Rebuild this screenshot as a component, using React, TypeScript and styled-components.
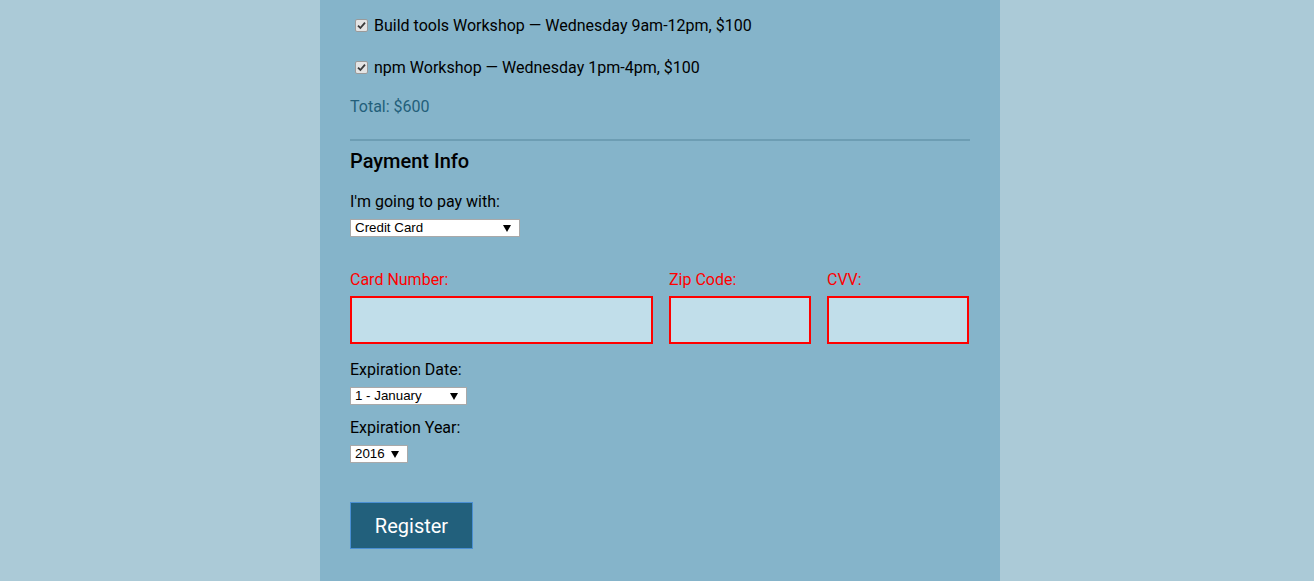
import React from "react";
import styled, { createGlobalStyle } from "styled-components";

const Global = createGlobalStyle`
  html, body { margin: 0; padding: 0; }
  body {
    background: #abcad7;
    font-family: Roboto, "Noto Sans", Arial, sans-serif;
    color: #000;
  }
`;

const Page = styled.div`
  display: flex;
  justify-content: center;
  padding-left: 6px;
  min-height: 581px;
`;

const Container = styled.form`
  width: 620px;
  padding: 15px 30px 32px;
  background: #85b4ca;
  display: flex;
  flex-direction: column;
`;

const ActivityRow = styled.label<{ $first?: boolean }>`
  display: flex;
  align-items: center;
  height: 20px;
  font-size: 16px;
  margin-top: ${(p) => (p.$first ? 0 : 22)}px;
  padding-left: 5px;
`;

const CheckBox = styled.span`
  width: 11px;
  height: 11px;
  border: 1px solid #9a9a9a;
  background: #e4e4e4;
  border-radius: 2px;
  display: inline-flex;
  align-items: center;
  justify-content: center;
  margin-right: 6px;
  flex: none;
`;

const Total = styled.div`
  margin-top: 20px;
  height: 20px;
  line-height: 20px;
  font-size: 16px;
  color: #235f7a;
`;

const Rule = styled.hr`
  margin: 22px 0 0;
  border: none;
  height: 2px;
  background: #6d9db3;
`;

const Heading = styled.h2`
  margin: 8px 0 0;
  font-size: 20px;
  font-weight: 500;
  line-height: 24px;
`;

const FieldLabel = styled.div<{ $top: number }>`
  margin-top: ${(p) => p.$top}px;
  height: 20px;
  line-height: 20px;
  font-size: 16px;
  color: #000;
`;

const SelectWrap = styled.div<{ $width: number }>`
  position: relative;
  margin-top: 7px;
  width: ${(p) => p.$width}px;
  height: 18px;
`;

const NativeSelect = styled.select`
  appearance: none;
  -webkit-appearance: none;
  display: block;
  width: 100%;
  height: 18px;
  margin: 0;
  box-sizing: border-box;
  border: 1px solid #a9a9a9;
  border-radius: 0;
  background: #fff;
  font-family: "Liberation Sans", Arial, sans-serif;
  font-size: 13.333px;
  padding: 0 0 0 4px;
  color: #000;
  line-height: 16px;
  outline: none;
`;

const Arrow = styled.svg`
  position: absolute;
  right: 9px;
  top: 6px;
  pointer-events: none;
`;

const CardGrid = styled.div`
  display: grid;
  grid-template-columns: 303px 142px 142px;
  column-gap: 16px;
  margin-top: 33px;
`;

const CardField = styled.div`
  display: flex;
  flex-direction: column;
`;

const ErrLabel = styled.label`
  height: 20px;
  line-height: 20px;
  font-size: 16px;
  color: #ff0000;
`;

const TextInput = styled.input`
  margin-top: 6px;
  box-sizing: border-box;
  height: 48px;
  width: 100%;
  border: 2px solid #ff0000;
  background: #c1deea;
  outline: none;
`;

const Button = styled.button`
  margin-top: 39px;
  width: 123px;
  height: 47px;
  box-sizing: border-box;
  background: #22607c;
  border: 1px solid #4a8fd3;
  color: #fff;
  font-family: Roboto, Arial, sans-serif;
  font-size: 20px;
  cursor: pointer;
  padding: 0;
`;

const Check = () => (
  <svg width="9" height="9" viewBox="0 0 9 9">
    <path d="M1 4.6 L3.4 7 L8 1.6" fill="none" stroke="#3a3a3a" strokeWidth="1.8" />
  </svg>
);

const Select = ({ width, options }: { width: number; options: string[] }) => (
  <SelectWrap $width={width}>
    <NativeSelect defaultValue={options[0]}>
      {options.map((o) => (
        <option key={o}>{o}</option>
      ))}
    </NativeSelect>
    <Arrow width="8" height="7" viewBox="0 0 8 7">
      <path d="M0 0 H8 L4 7 Z" fill="#000" />
    </Arrow>
  </SelectWrap>
);

export default function App() {
  return (
    <>
      <Global />
      <Page>
        <Container onSubmit={(e) => e.preventDefault()}>
          <ActivityRow $first>
            <CheckBox>
              <Check />
            </CheckBox>
            Build tools Workshop — Wednesday 9am-12pm, $100
          </ActivityRow>
          <ActivityRow>
            <CheckBox>
              <Check />
            </CheckBox>
            npm Workshop — Wednesday 1pm-4pm, $100
          </ActivityRow>
          <Total>Total: $600</Total>
          <Rule />
          <Heading>Payment Info</Heading>
          <FieldLabel $top={19}>I'm going to pay with:</FieldLabel>
          <Select width={170} options={["Credit Card", "PayPal", "Bitcoin"]} />
          <CardGrid>
            <CardField>
              <ErrLabel>Card Number:</ErrLabel>
              <TextInput />
            </CardField>
            <CardField>
              <ErrLabel>Zip Code:</ErrLabel>
              <TextInput />
            </CardField>
            <CardField>
              <ErrLabel>CVV:</ErrLabel>
              <TextInput />
            </CardField>
          </CardGrid>
          <FieldLabel $top={16}>Expiration Date:</FieldLabel>
          <Select width={117} options={["1 - January", "2 - February", "3 - March"]} />
          <FieldLabel $top={13}>Expiration Year:</FieldLabel>
          <Select width={58} options={["2016", "2017", "2018"]} />
          <div>
            <Button type="submit">Register</Button>
          </div>
        </Container>
      </Page>
    </>
  );
}
